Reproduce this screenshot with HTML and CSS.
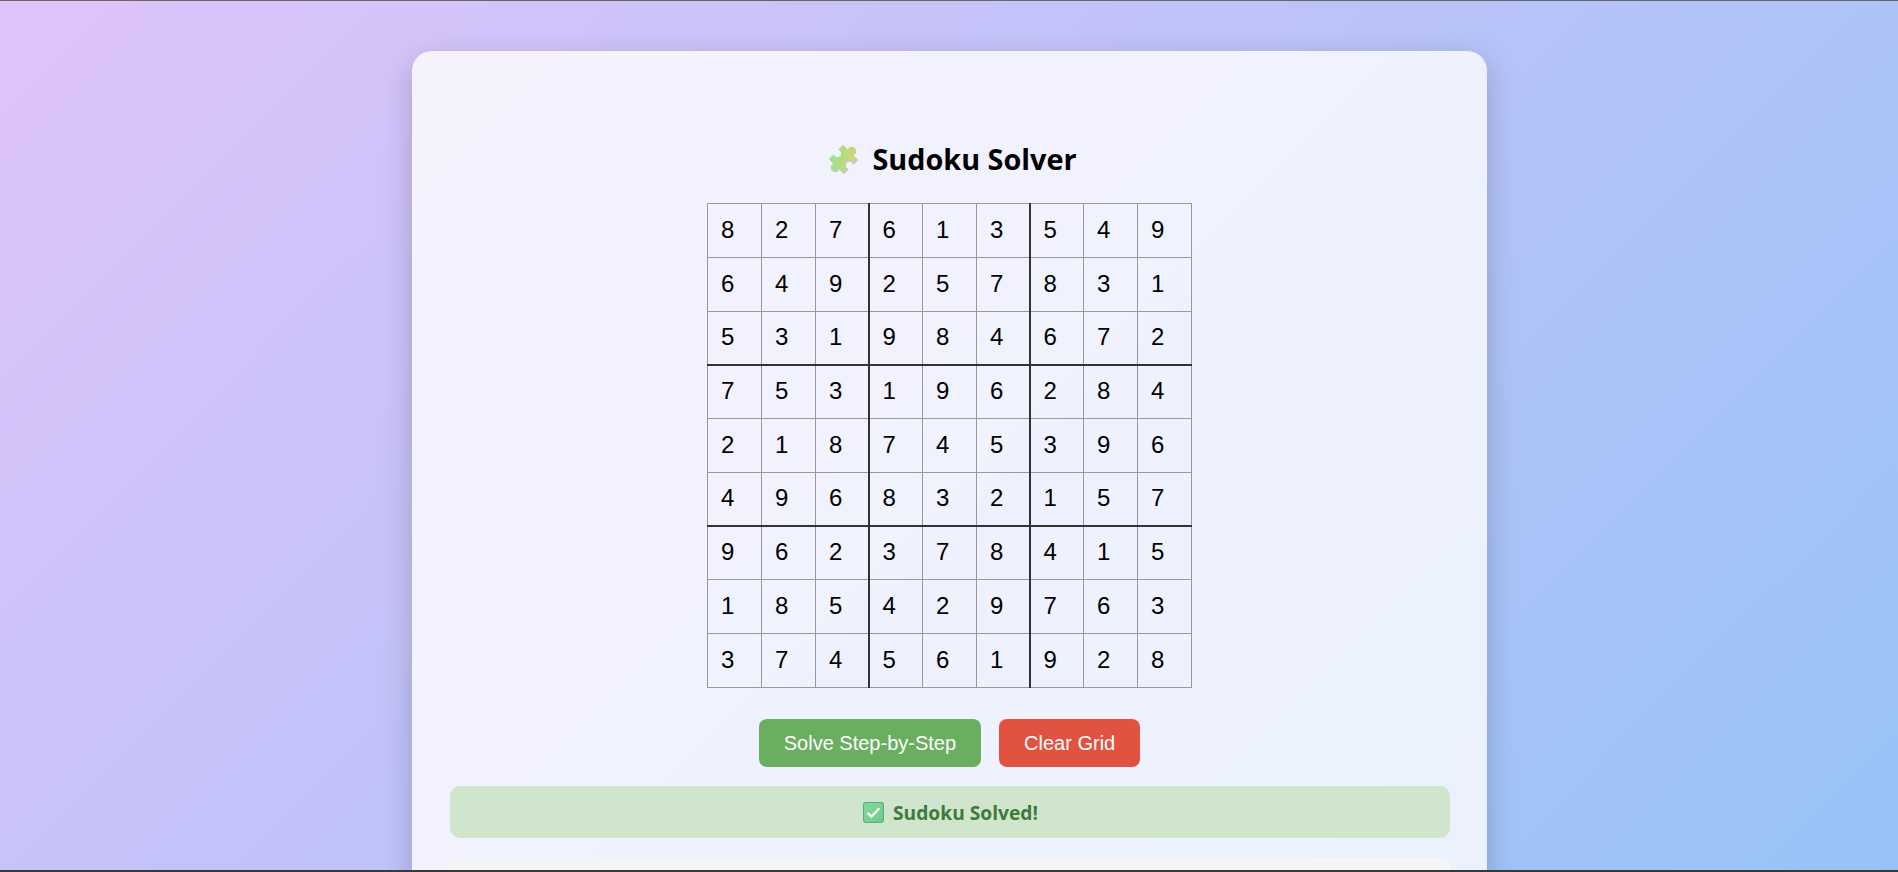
FILE: index.html
```html
<!DOCTYPE html>
<html lang="en">
<head>
  <meta charset="UTF-8">
  <meta name="viewport" content="width=device-width, initial-scale=1.0">
  <title>Sudoku Solver</title>
  <link rel="stylesheet" href="styles.css">
</head>
<body>
  <div class="container">
    <h1 class="title">
      <svg class="title-icon" viewBox="2 2 24 24" aria-hidden="true">
        <defs>
          <linearGradient id="puzzleFill" x1="0" y1="1" x2="1" y2="0" gradientUnits="objectBoundingBox">
            <stop offset="0" stop-color="#8ee59a"/>
            <stop offset="1" stop-color="#dcd65c"/>
          </linearGradient>
        </defs>
        <path fill="#cdb8ee" transform="translate(0.800 0.800) rotate(45 14 14)" d="M6 6H11.500A3 3 0 1 1 16.500 6H22V11.500A3 3 0 1 0 22 16.500V22H16.500A3 3 0 1 1 11.500 22H6V16.500A3 3 0 1 0 6 11.500Z"/>
        <path fill="url(#puzzleFill)" transform="rotate(45 14 14)" d="M6 6H11.500A3 3 0 1 1 16.500 6H22V11.500A3 3 0 1 0 22 16.500V22H16.500A3 3 0 1 1 11.500 22H6V16.500A3 3 0 1 0 6 11.500Z"/>
      </svg>
      <span>Sudoku Solver</span>
    </h1>

    <table class="board">
      <tr><td>8</td><td>2</td><td>7</td><td>6</td><td>1</td><td>3</td><td>5</td><td>4</td><td>9</td></tr>
      <tr><td>6</td><td>4</td><td>9</td><td>2</td><td>5</td><td>7</td><td>8</td><td>3</td><td>1</td></tr>
      <tr><td>5</td><td>3</td><td>1</td><td>9</td><td>8</td><td>4</td><td>6</td><td>7</td><td>2</td></tr>
      <tr><td>7</td><td>5</td><td>3</td><td>1</td><td>9</td><td>6</td><td>2</td><td>8</td><td>4</td></tr>
      <tr><td>2</td><td>1</td><td>8</td><td>7</td><td>4</td><td>5</td><td>3</td><td>9</td><td>6</td></tr>
      <tr><td>4</td><td>9</td><td>6</td><td>8</td><td>3</td><td>2</td><td>1</td><td>5</td><td>7</td></tr>
      <tr><td>9</td><td>6</td><td>2</td><td>3</td><td>7</td><td>8</td><td>4</td><td>1</td><td>5</td></tr>
      <tr><td>1</td><td>8</td><td>5</td><td>4</td><td>2</td><td>9</td><td>7</td><td>6</td><td>3</td></tr>
      <tr><td>3</td><td>7</td><td>4</td><td>5</td><td>6</td><td>1</td><td>9</td><td>2</td><td>8</td></tr>
    </table>

    <div class="controls">
      <button type="button" class="btn btn-solve">Solve Step-by-Step</button>
      <button type="button" class="btn btn-clear">Clear Grid</button>
    </div>

    <div class="status">
      <svg class="status-icon" viewBox="0 0 20 20" aria-hidden="true">
        <defs>
          <linearGradient id="checkFill" x1="0" y1="0" x2="1" y2="1">
            <stop offset="0" stop-color="#86dca0"/>
            <stop offset="1" stop-color="#6cc98a"/>
          </linearGradient>
        </defs>
        <rect x="0.500" y="0.500" width="19" height="19" rx="2.500" fill="url(#checkFill)" stroke="#5fa97a"/>
        <path d="M4.500 10.500L8 14L15.500 6" fill="none" stroke="#fff" stroke-width="2.200"/>
      </svg>
      <span>Sudoku Solved!</span>
    </div>

    <div class="log"></div>
  </div>
</body>
</html>
```

FILE: styles.css
```css
html {
  height: 100%;
  overflow: hidden;
}

body {
  box-sizing: border-box;
  height: 872px;
  margin: 0;
  overflow: hidden;
  border-top: 1px solid #666;
  border-bottom: 2px solid #333a3a;
  background: linear-gradient(135deg, #dfc3fa 0%, #8fc3f6 100%) no-repeat;
  background-size: 100% 1150px;
  font-family: "Liberation Sans", Arial, sans-serif;
}

.container {
  box-sizing: border-box;
  width: 1075px;
  margin: 50px auto 0;
  padding: 89px 37px 40px 38px;
  background-color: rgba(255, 255, 255, 0.78);
  border-radius: 20px;
  box-shadow: 0 10px 30px rgba(0, 0, 0, 0.2);
}

.title {
  display: flex;
  align-items: center;
  justify-content: center;
  gap: 14px;
  margin: 0 0 25px;
  padding-left: 6px;
  font-family: "Open Sans", sans-serif;
  font-size: 28.8px;
  line-height: 38px;
  color: #000;
}

.title-icon {
  width: 30px;
  height: 30px;
}

.board {
  width: 485px;
  margin: 0 auto;
  border-collapse: collapse;
  table-layout: fixed;
  font-size: 24px;
}

.board td {
  box-sizing: border-box;
  width: 54px;
  height: 54px;
  padding: 0 0 2px 13px;
  border: 1px solid #999;
  color: #000;
}

.board td:nth-child(3),
.board td:nth-child(6) {
  width: 53px;
}

.board tr:nth-child(3) td,
.board tr:nth-child(6) td {
  height: 53px;
}

.board td:nth-child(3n):not(:last-child) {
  border-right: 2px solid #333;
}

.board tr:nth-child(3n):not(:last-child) td {
  border-bottom: 2px solid #333;
}

.controls {
  display: flex;
  justify-content: center;
  gap: 18px;
  margin-top: 31px;
}

.btn {
  height: 48px;
  padding: 0 25px;
  border: none;
  border-radius: 8px;
  color: #fff;
  font-family: "Liberation Sans", Arial, sans-serif;
  font-size: 20px;
}

.btn-solve {
  background-color: #6aae5f;
}

.btn-clear {
  background-color: #e25241;
}

.status {
  display: flex;
  align-items: center;
  justify-content: center;
  gap: 9px;
  height: 52px;
  margin-top: 19px;
  padding-left: 2px;
  border-radius: 10px;
  background-color: #cfe5cc;
  color: #3f7a3c;
  font-family: "Open Sans", sans-serif;
  font-size: 19.2px;
  font-weight: 700;
}

.status-icon {
  width: 21px;
  height: 21px;
}

.log {
  height: 200px;
  margin-top: 20px;
  border-radius: 10px;
  background-color: #f5f5f5;
}
```
